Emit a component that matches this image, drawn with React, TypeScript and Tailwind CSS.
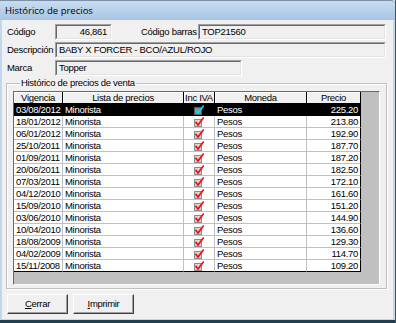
import React from "react";

const rows: [string, string][] = [
  ["03/08/2012", "225.20"],
  ["18/01/2012", "213.80"],
  ["06/01/2012", "192.90"],
  ["25/10/2011", "187.70"],
  ["01/09/2011", "187.20"],
  ["20/06/2011", "182.50"],
  ["07/03/2011", "172.10"],
  ["04/12/2010", "161.60"],
  ["15/09/2010", "151.20"],
  ["03/06/2010", "144.90"],
  ["10/04/2010", "136.60"],
  ["18/08/2009", "129.30"],
  ["04/02/2009", "114.70"],
  ["15/11/2008", "109.20"],
];

const font = "font-['Liberation_Sans',Arial,sans-serif] text-[9.5px] tracking-[-0.3px]";

function Field({ className, children, right }: { className: string; children: React.ReactNode; right?: boolean }) {
  return (
    <div
      className={`${className} h-[16px] shrink-0 border border-t-[#a0a0a0] border-l-[#a0a0a0] border-b-white border-r-white`}
    >
      <div
        className={`h-full flex items-center border border-t-[#696969] border-l-[#696969] border-b-[#e3e3e3] border-r-[#e3e3e3] px-[2px] leading-none text-black whitespace-nowrap ${
          right ? "justify-end pr-[3px]" : ""
        }`}
      >
        {children}
      </div>
    </div>
  );
}

function CheckIcon({ selected }: { selected: boolean }) {
  return (
    <svg width="10" height="10" viewBox="0 0 10 10">
      <rect x="0.5" y="2.5" width="7" height="7" fill={selected ? "#8a8a8a" : "#d6d6d6"} stroke={selected ? "#5a5a5a" : "#8c8c8c"} />
      <path
        d="M2 5.5 L4 8 L9.2 1.2"
        fill="none"
        stroke={selected ? "#00d8f8" : "#ee1111"}
        strokeWidth="1.7"
        strokeLinecap="square"
      />
    </svg>
  );
}

const cols = ["w-[49px]", "w-[121px]", "w-[31px]", "w-[92px]", "w-[54px]"];

function Button({ first, rest }: { first: string; rest: string }) {
  return (
    <button
      type="button"
      className="w-[61px] h-[20px] bg-[#f0f0f0] border border-t-white border-l-white border-b-[#404040] border-r-[#404040] shadow-[inset_-1px_-1px_0_#a0a0a0] flex items-center justify-center leading-none text-black"
    >
      <span className="underline">{first}</span>
      {rest}
    </button>
  );
}

export default function App() {
  return (
    <div className={`w-[396px] h-[323px] flex flex-col overflow-hidden bg-[#f0f0f0] border-r border-[#3a5669] ${font}`}>
      {/* title bar */}
      <div className="h-[20px] shrink-0 border-t border-[#7990a6] rounded-tr-[4px] bg-gradient-to-b from-[#c9dcf0] to-[#a8c5e3] flex items-center pl-[5px]">
        <span className="font-['Open_Sans','Noto_Sans',sans-serif] text-[9.5px] tracking-normal text-black leading-none">
          Histórico de precios
        </span>
      </div>

      {/* body */}
      <div className="flex-1 flex flex-col border-l-2 border-r-2 border-b border-[#c3d7ec] pl-[5px] pt-[4px]">
        <div className="flex flex-col gap-[2px]">
          <div className="flex items-center">
            <span className="w-[48px] shrink-0">Código</span>
            <Field className="w-[57px]" right>
              46,861
            </Field>
            <span className="ml-[29px] w-[57px] shrink-0 whitespace-nowrap">Código barras</span>
            <Field className="w-[188px]">TOP21560</Field>
          </div>
          <div className="flex items-center">
            <span className="w-[48px] shrink-0 whitespace-nowrap">Descripción</span>
            <Field className="w-[331px]">BABY X FORCER - BCO/AZUL/ROJO</Field>
          </div>
          <div className="flex items-center">
            <span className="w-[48px] shrink-0">Marca</span>
            <Field className="w-[187px]">Topper</Field>
          </div>
        </div>

        {/* group box */}
        <fieldset className="mt-[1px] ml-[-1px] w-[381px] border border-[#c0c0c0] shadow-[inset_1px_1px_0_#fff,1px_1px_0_#fff] pl-[6px] pt-[2px] pb-[3px]">
          <legend className="ml-[7px] px-[1px] leading-[12px] text-black">Histórico de precios de venta</legend>
          <div className="w-[367px] h-[194px] bg-[#c0c0c0] border border-t-[#696969] border-l-[#696969] border-b-white border-r-white">
            <div className="w-[347px]">
              <div className="flex h-[12px]">
                {["Vigencia", "Lista de precios", "Inc IVA", "Moneda", "Precio"].map((h, i) => (
                  <div
                    key={h}
                    className={`${cols[i]} bg-[#f0f0f0] border-r border-b border-black shadow-[inset_1px_1px_0_#fff] flex items-center justify-center leading-none text-black whitespace-nowrap overflow-hidden`}
                  >
                    {h}
                  </div>
                ))}
              </div>
              {rows.map(([date, price], r) => {
                const sel = r === 0;
                const last = r === rows.length - 1;
                const cell = `h-[12px] border-r ${last ? "border-b border-b-black" : "border-b"} ${
                  sel ? "bg-black text-white border-black" : "bg-white text-black border-[#c0c0c0]"
                } flex items-center leading-none whitespace-nowrap overflow-hidden`;
                return (
                  <div key={date} className="flex">
                    <div className={`${cols[0]} ${cell} pl-[2px]`}>{date}</div>
                    <div className={`${cols[1]} ${cell} pl-[2px]`}>Minorista</div>
                    <div className={`${cols[2]} ${cell} justify-center`}>
                      <CheckIcon selected={sel} />
                    </div>
                    <div className={`${cols[3]} ${cell} pl-[2px]`}>Pesos</div>
                    <div className={`${cols[4]} ${cell} justify-end pr-[2px] border-r-black`}>{price}</div>
                  </div>
                );
              })}
            </div>
          </div>
        </fieldset>

        <div className="mt-[5px] flex gap-[5px]">
          <Button first="C" rest="errar" />
          <Button first="I" rest="mprimir" />
        </div>
      </div>
      <div className="h-[3px] shrink-0 bg-[#1f3e50]" />
    </div>
  );
}
